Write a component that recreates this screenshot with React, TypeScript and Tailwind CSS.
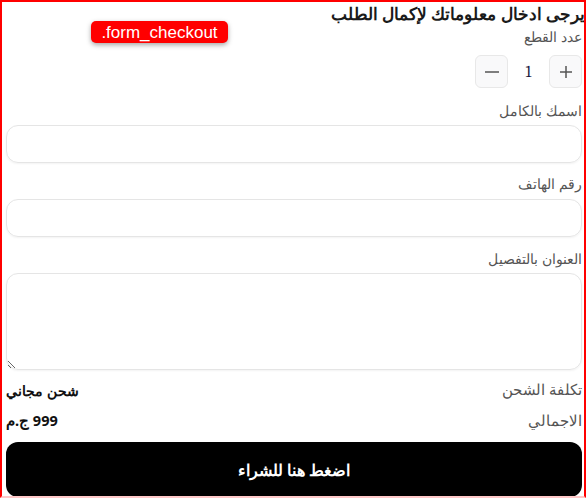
import React from "react";

export default function App() {
  return (
    <div className="bg-white w-[587px] h-[500px] overflow-hidden font-sans">
      <div dir="rtl" className="relative w-[586px] h-[498px] border-2 border-[#ff0000] border-b-[#ffc8c8] pl-1 pr-0.5 overflow-hidden">
        <h1 className="text-[16.5px] leading-[24px] font-bold text-[#1a1a1a] -mr-[3px]">يرجى ادخال معلوماتك لإكمال الطلب</h1>
        <label className="block text-[14px] leading-[20px] text-[#555] mt-[1px]">عدد القطع</label>
        <div className="flex items-center mt-[8px]">
          <button className="w-[33px] h-[33px] rounded-md border border-[#e8e8e8] bg-[#f9f9fa] flex items-center justify-center">
            <svg width="14" height="14" viewBox="0 0 14 14"><path d="M7 1v12M1 7h12" stroke="#555" strokeWidth="1.5" /></svg>
          </button>
          <span className="w-[41px] text-center text-[16px] text-[#1a1a40] font-serif">1</span>
          <button className="w-[33px] h-[33px] rounded-md border border-[#e8e8e8] bg-[#f9f9fa] flex items-center justify-center">
            <svg width="16" height="14" viewBox="0 0 16 14"><path d="M1 7h14" stroke="#555" strokeWidth="1.5" /></svg>
          </button>
        </div>
        <label className="block text-[14px] leading-[20px] text-[#555] mt-[13px]">اسمك بالكامل</label>
        <input className="block w-full h-[38px] mt-[4px] rounded-xl border border-[#e5e5e5] shadow-[0_1px_2px_rgba(0,0,0,0.05)] outline-none" />
        <label className="block text-[14px] leading-[20px] text-[#555] mt-[11px]">رقم الهاتف</label>
        <input className="block w-full h-[38px] mt-[5px] rounded-xl border border-[#e5e5e5] shadow-[0_1px_2px_rgba(0,0,0,0.05)] outline-none" />
        <label className="block text-[14px] leading-[20px] text-[#555] mt-[12px]">العنوان بالتفصيل</label>
        <textarea className="block w-full h-[97px] mt-[4px] rounded-xl border border-[#e5e5e5] shadow-[0_1px_2px_rgba(0,0,0,0.05)] outline-none" />
        <div className="flex justify-between items-center h-[20px] mt-[10px]">
          <span className="text-[14.5px] text-[#555]">تكلفة الشحن</span>
          <span className="text-[14px] font-bold text-[#111]">شحن مجاني</span>
        </div>
        <div className="flex justify-between items-center h-[20px] mt-[11px]">
          <span className="text-[14.5px] text-[#555]">الاجمالي</span>
          <span className="text-[14.5px] font-bold text-[#111]">999 ج.م</span>
        </div>
        <button className="block w-full h-[55px] mt-[11px] rounded-xl bg-black text-white text-[16px] font-bold">اضغط هنا للشراء</button>
        <div dir="ltr" className="absolute left-[89px] top-[19px] w-[137px] h-[22px] rounded-[5px] bg-[#ff0000] shadow-[0_2px_5px_rgba(0,0,0,0.35)] flex items-center justify-center text-white text-[17px] leading-none font-['Liberation_Sans',Arial,sans-serif]">.form_checkout</div>
      </div>
    </div>
  );
}
